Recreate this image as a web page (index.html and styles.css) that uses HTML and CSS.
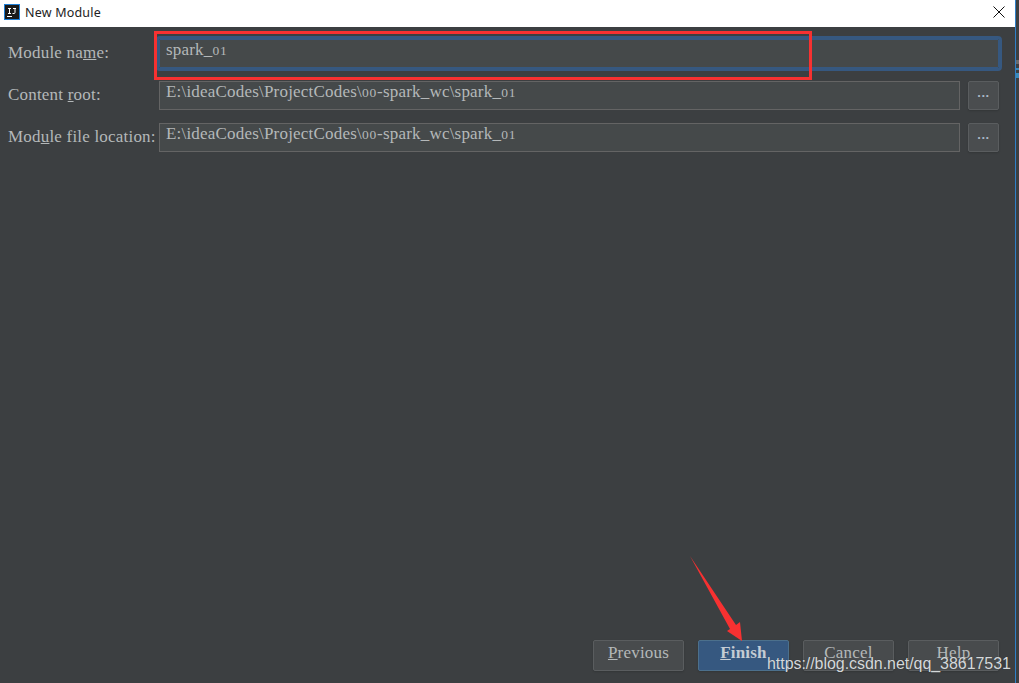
FILE: index.html
```html
<!DOCTYPE html>
<html lang="en">
<head>
  <meta charset="UTF-8">
  <title>New Module</title>
  <link rel="stylesheet" href="styles.css">
</head>
<body>

  <div class="dialog">
    <div class="titlebar">
      <svg class="app-icon" width="16" height="16" viewBox="0 0 16 16">
        <rect x="0.5" y="0.5" width="15" height="15" fill="#1a1a1a" stroke="#1f7fd6"/>
        <rect x="3" y="12" width="5" height="1" fill="#fff"/>
        <path d="M4 4.500h3M5.500 4.500v4.500M4 9.500h3M9 4.500h3M11 4.500v4q0 1-1 1H8.500" fill="none" stroke="#fff"/>
      </svg>
      <span class="title">New Module</span>
      <svg class="close" width="12" height="12" viewBox="0 0 12 12">
        <path d="M.5.5l11 11M11.500.5l-11 11" stroke="#111" stroke-width="1"/>
      </svg>
    </div>

    <div class="content">
      <div class="form">
        <label>Module na<u>m</u>e:</label>
        <div class="field focused">spark_<span class="num">01</span></div>

        <label>Content <u>r</u>oot:</label>
        <div class="field-row">
          <div class="field">E:\ideaCodes\ProjectCodes\<span class="num">00</span>-spark_wc\spark_<span class="num">01</span></div>
          <button class="browse">...</button>
        </div>

        <label>Mod<u>u</u>le file location:</label>
        <div class="field-row">
          <div class="field">E:\ideaCodes\ProjectCodes\<span class="num">00</span>-spark_wc\spark_<span class="num">01</span></div>
          <button class="browse">...</button>
        </div>
      </div>

      <div class="buttons">
        <button class="btn"><u>P</u>revious</button>
        <button class="btn primary"><u>F</u>inish</button>
        <button class="btn">Cancel</button>
        <button class="btn">Help</button>
      </div>
    </div>
  </div>

  <div class="side-strip">
    <div class="strip-mark"></div>
  </div>

  <!-- annotations drawn on top of the screenshot -->
  <div class="red-box"></div>
  <svg class="red-arrow" width="60" height="90" viewBox="0 0 60 90">
    <path d="M0 3L46 72L50 69L52 88L37 78L40 76Z" fill="#f73131"/>
  </svg>
  <div class="watermark">https://blog.csdn.net/qq_38617531</div>

</body>
</html>
```

FILE: styles.css
```css
* {
  box-sizing: border-box;
}

html, body {
  height: 100%;
}

body {
  margin: 0;
  position: relative;
  display: flex;
  overflow: hidden;
  background: #3c3f41;
  font-family: "Liberation Serif", serif;
  font-size: 17px;
  letter-spacing: 0.2px;
  color: #b4b8b9;
}

.dialog {
  flex: 1;
  display: flex;
  flex-direction: column;
}

.titlebar {
  height: 27px;
  flex: none;
  display: flex;
  align-items: center;
  padding: 0 10px 3px 4px;
  background: white;
}

.title {
  margin-left: 5px;
  font-family: "Noto Sans", sans-serif;
  font-size: 12.500px;
  letter-spacing: 0.2px;
  color: #222;
}

.close {
  margin-left: auto;
}

.content {
  flex: 1;
  display: flex;
  flex-direction: column;
  justify-content: space-between;
  background: #3c3f41;
  padding: 12px 16px 12px 8px;
}

.form {
  display: grid;
  grid-template-columns: 151px 1fr;
  row-gap: 13px;
  align-items: center;
}

label {
  padding-bottom: 2px;
}

u {
  text-underline-offset: 1px;
}

/* the reference font has old-style digits, these sit near x-height */
.num {
  font-size: 13.500px;
  letter-spacing: 0.8px;
}

.field {
  flex: 1;
  height: 29px;
  padding: 0 6px;
  background: #45494a;
  border: 1px solid #646464;
  line-height: 20px;
  color: #b4b8b9;
}

.field.focused {
  border-color: #365880;
  border-radius: 1px;
  outline: 3px solid #365880;
}

.field-row {
  display: flex;
  gap: 8px;
}

.browse {
  width: 31px;
  height: 29px;
  padding: 0 0 6px;
  background: #4a4d4f;
  border: 1px solid #5a5d5f;
  border-radius: 2px;
  box-shadow: 0 1px 2px rgba(0, 0, 0, 0.15);
  font-family: "Liberation Sans", sans-serif;
  font-weight: bold;
  font-size: 13px;
  letter-spacing: 0.5px;
  color: #a9b7c6;
}

.buttons {
  display: flex;
  justify-content: flex-end;
  gap: 14px;
}

.btn {
  width: 91px;
  height: 31px;
  padding: 0 0 5px;
  background: #484b4d;
  border: 1px solid #5a5d5f;
  border-radius: 2px;
  box-shadow: 0 1px 2px rgba(0, 0, 0, 0.15);
  font-family: "Liberation Serif", serif;
  font-size: 17px;
  letter-spacing: 0.2px;
  color: #b4b8b9;
}

.btn.primary {
  background: #365880;
  border-color: #4c708c;
  font-weight: bold;
  color: #c4ccd4;
}

.side-strip {
  width: 4px;
  flex: none;
  padding-top: 60px;
  background: #3c3f41;
  border-left: 1px solid #2f80c8;
}

.strip-mark {
  height: 18px;
  background: linear-gradient(#6b6b6b 0 4px, #3c3f41 4px 8px, #3d8ab8 8px 10px, #3c3f41 10px 13px, #3d8ab8 13px);
}

.red-box {
  position: absolute;
  left: 154px;
  top: 31px;
  width: 658px;
  height: 49px;
  border: 3px solid #f73131;
}

.red-arrow {
  position: absolute;
  left: 690px;
  top: 553px;
}

.watermark {
  position: absolute;
  left: 767px;
  top: 655px;
  font-family: "Liberation Sans", sans-serif;
  font-size: 16px;
  letter-spacing: -0.05px;
  color: #d4d8da;
  text-shadow: 0 0 1px rgba(0, 0, 0, 0.3);
}
```
